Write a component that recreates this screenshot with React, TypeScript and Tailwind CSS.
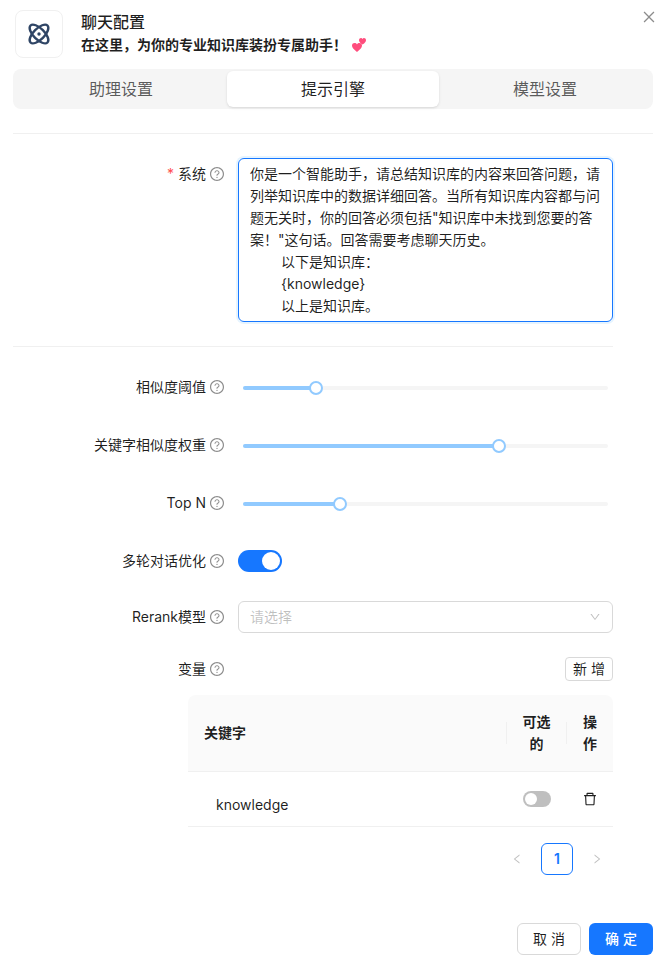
import {
  AiOutlineClose,
  AiOutlineDelete,
  AiOutlineDown,
  AiOutlineLeft,
  AiOutlineQuestionCircle,
  AiOutlineRight,
} from "react-icons/ai";

const Label = ({ text, required }: { text: string; required?: boolean }) => (
  <div className="flex w-[212px] shrink-0 items-center justify-end text-sm leading-[22px] text-[#000000e0]">
    {required && <span className="mr-1 text-[#ff4d4f]">*</span>}
    <span>{text}</span>
    <AiOutlineQuestionCircle className="ml-[3px] text-base text-[#00000073]" />
  </div>
);

const Slider = ({ label, value }: { label: string; value: number }) => (
  <div className="mb-[36px] flex h-[22px] items-center">
    <Label text={label} />
    <div className="relative mt-[2px] ml-[18px] h-1 w-[365px] rounded-sm bg-[#f5f5f5]">
      <div className="h-1 rounded-sm bg-[#91caff]" style={{ width: `${value}%` }} />
      <div
        className="absolute top-1/2 h-[14px] w-[14px] -translate-x-1/2 -translate-y-1/2 rounded-full border-2 border-[#91caff] bg-white"
        style={{ left: `${value}%` }}
      />
    </div>
  </div>
);

const tabs = ["助理设置", "提示引擎", "模型设置"];

export default function App() {
  return (
    <div
      className="flex h-[961px] w-[663px] flex-col overflow-hidden bg-white pr-[10px] pl-[13px] text-[#000000e0]"
      style={{ fontFamily: 'Inter, "Noto Sans CJK SC", sans-serif' }}
    >
      <header className="relative flex h-[69px] pt-[10px] pl-[2px]">
        <div className="flex h-12 w-12 items-center justify-center rounded-lg border border-[#f0f0f0] bg-white">
          <svg width="24" height="24" viewBox="0 0 24 24" fill="none" stroke="#2f4565" strokeWidth="2.4">
            <ellipse cx="12" cy="12" rx="12" ry="5.5" transform="rotate(45 12 12)" />
            <ellipse cx="12" cy="12" rx="12" ry="5.5" transform="rotate(-45 12 12)" />
            <circle cx="12" cy="12" r="1.7" fill="#2f4565" stroke="none" />
          </svg>
        </div>
        <div className="ml-[18px]">
          <div className="text-base leading-6 font-medium">聊天配置</div>
          <div className="flex items-center text-sm leading-[22px] font-semibold">
            <span>在这里，为你的专业知识库装扮专属助手！</span>
            <svg className="ml-[5px]" width="15" height="15" viewBox="0 0 15 15" fill="#ff4d7d">
              <path d="M5 14C1.5 11.5 0 9.5 0 7.6 0 5.8 1.3 5 2.6 5 3.6 5 4.5 5.5 5 6.4 5.5 5.5 6.4 5 7.4 5 8.7 5 10 5.8 10 7.6 10 9.5 8.5 11.5 5 14Z" />
              <path d="M10.5 6.5C8 5 7 3.6 7 2.2 7 .9 8 0 9 0 9.6 0 10.2 .4 10.5 1 10.8 .4 11.4 0 12 0 13 0 14 .9 14 2.2 14 3.6 13 5 10.5 6.5Z" />
            </svg>
          </div>
        </div>
        <AiOutlineClose className="absolute top-[9px] right-[-4px] text-base text-[#00000073]" />
      </header>

      <div className="flex h-10 items-center rounded-lg bg-[#f5f5f5] px-[2px]">
        {tabs.map((t, i) => (
          <div
            key={t}
            className={
              i === 1
                ? "flex h-9 flex-1 items-center justify-center rounded-md bg-white text-base text-[#000000e0] shadow-sm"
                : "flex h-9 flex-1 items-center justify-center text-base text-[#000000a6]"
            }
          >
            {t}
          </div>
        ))}
      </div>

      <div className="mt-6 h-px bg-[#f0f0f0]" />

      <div className="mt-6 flex">
        <div className="mt-[5px] flex h-[22px]">
          <Label text="系统" required />
        </div>
        <div className="ml-[13px] h-[164px] w-[375px] rounded-md border border-[#1677ff] px-[11px] py-1 text-sm leading-[22px] shadow-[0_0_0_2px_rgba(5,145,255,0.1)]">
          <div>
            你是一个智能助手，请总结知识库的内容来回答问题，请列举知识库中的数据详细回答。当所有知识库内容都与问题无关时，你的回答必须包括"知识库中未找到您要的答案！"这句话。回答需要考虑聊天历史。
          </div>
          <div className="pl-[31px]">以下是知识库：</div>
          <div className="pl-[31px]">{"{knowledge}"}</div>
          <div className="pl-[31px]">以上是知识库。</div>
        </div>
      </div>

      <div className="mt-6 h-px w-[600px] bg-[#f0f0f0]" />

      <div className="mt-[29px]">
        <Slider label="相似度阈值" value={20} />
        <Slider label="关键字相似度权重" value={70} />
        <Slider label="Top N" value={26.6} />
      </div>

      <div className="mb-[29px] flex h-[22px] items-center">
        <Label text="多轮对话优化" />
        <div className="ml-[13px] flex h-[22px] w-11 items-center justify-end rounded-full bg-[#1677ff] px-[2px]">
          <div className="h-[18px] w-[18px] rounded-full bg-white" />
        </div>
      </div>

      <div className="mb-[24px] flex h-8 items-center">
        <Label text="Rerank模型" />
        <div className="ml-[13px] flex h-8 w-[375px] items-center justify-between rounded-md border border-[#d9d9d9] px-[11px] text-sm text-[#00000040]">
          <span>请选择</span>
          <AiOutlineDown className="text-xs" />
        </div>
      </div>

      <div className="flex h-6 w-[600px] items-center justify-between">
        <Label text="变量" />
        <button className="flex h-6 w-12 items-center justify-center rounded border border-[#d9d9d9] pl-1 text-sm tracking-[4px] whitespace-nowrap">
          新增
        </button>
      </div>

      <div className="mt-[14px] ml-[175px] w-[425px] text-sm">
        <div className="flex h-[77px] items-center rounded-t-lg border-b border-[#f0f0f0] bg-[#fafafa] leading-[22px] font-semibold text-[#000000e0]">
          <div className="flex-1 pl-4">关键字</div>
          <div className="flex h-[22px] w-[60px] items-center border-l border-[#f0f0f0] text-center">
            <div className="mx-auto w-[30px]">可选的</div>
          </div>
          <div className="flex h-[22px] w-[47px] items-center border-l border-[#f0f0f0] text-center">
            <div className="mx-auto w-[16px]">操作</div>
          </div>
        </div>
        <div className="flex h-[55px] items-center border-b border-[#f0f0f0]">
          <div className="flex-1 pt-[11px] pl-7">knowledge</div>
          <div className="flex w-[60px] justify-center pl-[2px]">
            <div className="flex h-4 w-7 items-center rounded-full bg-[#00000040] px-[2px]">
              <div className="h-3 w-3 rounded-full bg-white" />
            </div>
          </div>
          <div className="flex w-[47px] justify-center">
            <AiOutlineDelete className="text-base text-[#000000e0]" />
          </div>
        </div>
      </div>

      <div className="mt-4 flex h-8 w-[600px] items-center justify-end text-sm">
        <AiOutlineLeft className="text-xs text-[#00000040]" />
        <div className="mx-[18px] flex h-8 w-8 items-center justify-center rounded-md border border-[#1677ff] font-semibold text-[#1677ff]">
          1
        </div>
        <AiOutlineRight className="mr-[10px] text-xs text-[#00000040]" />
      </div>

      <div className="mt-[48px] flex justify-end gap-2 text-sm">
        <button className="h-8 w-16 rounded-md border border-[#d9d9d9] pl-1 tracking-[4px]">取消</button>
        <button className="h-8 w-16 rounded-md bg-[#1677ff] pl-1 font-medium tracking-[4px] text-white">确定</button>
      </div>
    </div>
  );
}
